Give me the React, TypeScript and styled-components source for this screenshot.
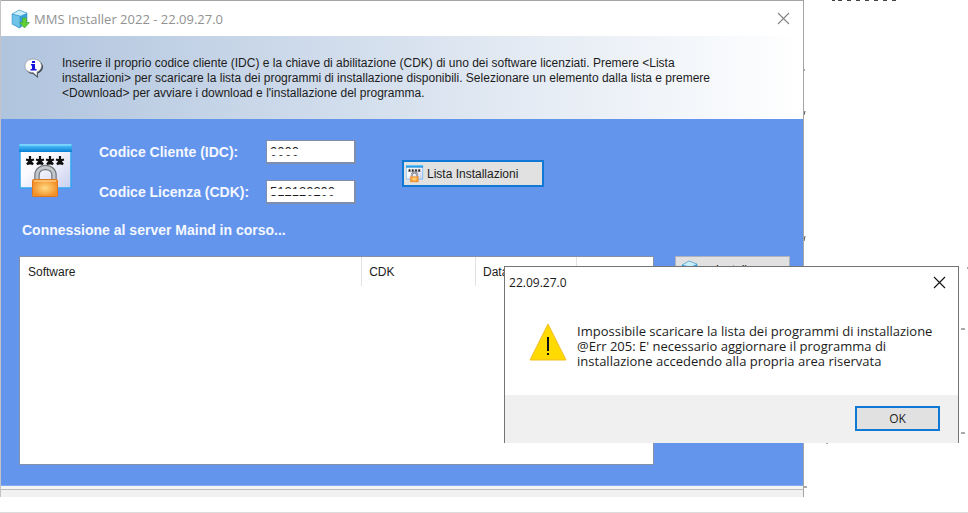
import React from "react";
import styled, { createGlobalStyle } from "styled-components";

const GlobalStyle = createGlobalStyle`
  * { box-sizing: border-box; }
  body { margin: 0; background: #fff; font-family: "Liberation Sans", Arial, sans-serif; font-size: 12px; color: #1c1c1c; }
  button, input { font: inherit; color: inherit; }
`;

const Desktop = styled.div`
  position: relative;
  min-height: 100vh;
  display: flex;
  align-items: flex-start;
  padding-left: 1px;
  background: #fff;
  border-bottom: 1px solid #dcdcdc;
`;

const Window = styled.main`
  flex: 1;
  min-width: 0;
  border: 1px solid #a5a5a8;
  border-left: 0;
  border-bottom: 0;
  background: #fff;
  box-shadow: -1px 0 0 #c4c4c8;
`;

const Backdrop = styled.aside`
  width: 17%;
  svg { display: block; }
`;

const TitleBar = styled.header<{ $active?: boolean }>`
  display: flex;
  align-items: center;
  font-family: "Open Sans", "Noto Sans", sans-serif;
  color: ${(p) => (p.$active ? "#1a1a1a" : "#929292")};
`;

const MainTitleBar = styled(TitleBar)`
  height: 35px;
  padding: 0 13px 0 9px;
  gap: 4px;
`;

const DialogTitleBar = styled(TitleBar)`
  height: 31px;
  padding: 0 12px 0 4px;
`;

const Title = styled.h1<{ $size: number }>`
  flex: 1;
  margin: 0;
  font-size: ${(p) => p.$size}px;
  font-weight: 400;
  line-height: 20px;
`;

const CloseButton = styled.button`
  display: flex;
  padding: 0;
  border: 0;
  background: none;
`;

const Banner = styled.section`
  display: flex;
  align-items: flex-start;
  gap: 18px;
  height: 83px;
  padding: 20px 80px 0 23px;
  background: linear-gradient(90deg, #b0c4de, #fff);
`;

const BannerText = styled.p`
  flex: 1;
  margin: 0;
  line-height: 15px;
`;

const Body = styled.section`
  padding: 21px 13px 20px 18px;
  background: #6495ed;
  border-bottom: 1px solid #84a9ee;
`;

const LoginRow = styled.form`
  display: flex;
  align-items: flex-start;
`;

const LockSlot = styled.div`
  width: 80px;
  padding-top: 4px;
`;

const Fields = styled.div`
  display: grid;
  grid-template-columns: 167px 90px;
  row-gap: 16px;
  align-items: center;
`;

const FieldLabel = styled.label`
  color: #f4f8ff;
  font-size: 14px;
  font-weight: 700;
  line-height: 16px;
`;

const FieldBox = styled.span`
  position: relative;
  display: block;
  height: 24px;
  &::after {
    content: "";
    position: absolute;
    left: 3px;
    right: 3px;
    top: 9px;
    height: 6px;
    background: #fff;
  }
`;

const Field = styled.input`
  display: block;
  width: 100%;
  height: 24px;
  padding: 0 3px;
  border: 2px solid #7f8fab;
  border-width: 1px 2px 2px 1px;
  background: #fff;
  font-size: 13px;
`;

const ListButton = styled.button`
  display: flex;
  align-items: center;
  gap: 3px;
  width: 142px;
  height: 27px;
  margin: 20px 0 0 46px;
  padding: 0 2px;
  border: 2px solid #0f79d5;
  background: #e1e1e1;
`;

const Status = styled.p`
  margin: 18px 0 18px 3px;
  color: #f4f8ff;
  font-size: 14px;
  font-weight: 700;
  line-height: 16px;
`;

const ListRow = styled.div`
  display: flex;
  align-items: flex-start;
  gap: 21px;
`;

const ListFrame = styled.div`
  flex: 1;
  height: 209px;
  border: 1px solid #8491a8;
  background: #fff;
`;

const SoftwareTable = styled.table`
  width: 100%;
  table-layout: fixed;
  border-collapse: collapse;
`;

const HeadCell = styled.th<{ $width: string }>`
  width: ${(p) => p.$width};
  height: 29px;
  padding: 1px 0 0 7px;
  border-right: 1px solid #e2e2e2;
  font-weight: 400;
  text-align: left;
  &:first-child { padding-left: 8px; }
  &:last-child { border-right: 0; }
`;

const InstallButton = styled.button`
  display: flex;
  align-items: center;
  gap: 16px;
  width: 115px;
  height: 27px;
  padding: 0 4px;
  border: 1px solid #adb2bc;
  background: #e1e1e1;
`;

const StatusStrip = styled.footer`
  height: 11px;
  border-top: 3px solid #f5f5f5;
  background: #f1f1f1;
  box-shadow: inset 0 1px 0 #bdbdbd;
`;

const Dialog = styled.section`
  position: absolute;
  top: 266px;
  right: 9px;
  width: 47%;
  border: 1px solid #747474;
  border-bottom: 0;
  background: #fff;
  font-family: "Open Sans", "Noto Sans", sans-serif;
`;

const Message = styled.div`
  display: flex;
  gap: 10px;
  height: 97px;
  padding: 26px 12px 0 24px;
`;

const MessageText = styled.p`
  margin: 0;
  font-size: 13px;
  line-height: 15px;
`;

const Actions = styled.footer`
  display: flex;
  justify-content: flex-end;
  height: 48px;
  padding: 11px 18px 0;
  background: #f0f0f0;
`;

const OkButton = styled.button`
  width: 85px;
  height: 25px;
  padding: 0;
  border: 2px solid #0f79d5;
  background: #e1e1e1;
`;

const BoxIcon = () => (
  <svg width="20" height="20" viewBox="0 0 20 20" aria-hidden="true">
    <path d="M2 5 9 1l8 3v10l-8 5-7-4z" fill="#3aa0d8" />
    <path d="M2 5 9 1l8 3-7 3z" fill="#c9eefa" />
    <path d="M2 5l8 2v12l-8-4z" fill="#6dc3ea" />
    <path d="M2 5l8 2v12l-8-4z M2 5 9 1l8 3v10l-8 5" fill="none" stroke="#2f87bd" strokeWidth=".5" />
    <path d="M12.500 9h4v4.500h3L14.500 19 9.500 13.500h3z" fill="#62ce35" stroke="#45a837" strokeWidth=".7" />
  </svg>
);

const CloseIcon = ({ color }: { color: string }) => (
  <svg width="13" height="13" viewBox="0 0 13 13" aria-hidden="true">
    <path d="M1 1l11 11M12 1 1 12" stroke={color} strokeWidth="1.1" />
  </svg>
);

const InfoIcon = () => (
  <svg width="20" height="23" viewBox="0 -2 20 23" aria-hidden="true">
    <path d="M10 2c5 0 9 3 9 7 0 3-2 5-5 6.500V20l-5-4C5 16 2 13 2 9.500S5 2 10 2z" fill="#3f4650" />
    <path d="M9 1c5 0 8.500 3 8.500 7 0 3-2 5-4.500 6v4l-4-3.500C4 14.500 1 12 1 8s3-7 8-7z" fill="#fff" stroke="#8b929e" strokeWidth=".7" />
    <path d="M8 3h3v2H8zM7 6h4v5h1.500v1.500H6.500V11H8V7.500H7z" fill="#1414dc" />
  </svg>
);

const PasswordLockIcon = ({ size }: { size: number }) => (
  <svg width={size} height={size} viewBox="0 0 56 56" aria-hidden="true">
    <defs>
      <linearGradient id="pane" x2="1" y2="1"><stop stopColor="#fff" /><stop offset=".4" stopColor="#fbfbff" /><stop offset="1" stopColor="#c9cfef" /></linearGradient>
      <radialGradient id="lock"><stop stopColor="#ffdc85" /><stop offset="1" stopColor="#f39229" /></radialGradient>
      <linearGradient id="bar" x2="0" y2="1"><stop stopColor="#5cc9ff" /><stop offset="1" stopColor="#087fd5" /></linearGradient>
    </defs>
    <rect x="1" y="1" width="51" height="43" rx="1" fill="url(#pane)" stroke="#35a5f1" strokeWidth="1.500" />
    <path d="M0 0h53v8H0z" fill="url(#bar)" />
    <path d="M1 1h51" stroke="#9be3ff" />
    <g stroke="#111" strokeWidth="2.200">
      {[11, 21, 31, 41].map((x) => (
        <path key={x} d={`M${x} 12v4.500M${x - 4} 15.500l4 1 4-1M${x - 3} 20.500l3-4 3 4`} />
      ))}
    </g>
    <path d="M18 37v-6c0-10 17-10 17 0v6" fill="none" stroke="#737780" strokeWidth="5.500" />
    <path d="M18 37v-6c0-10 17-10 17 0v6" fill="none" stroke="#c4c7ca" strokeWidth="3" />
    <rect x="13.500" y="35.500" width="25" height="17" rx="1" fill="url(#lock)" stroke="#df771e" />
    <path d="M15 37h22" stroke="#ffe5a8" />
  </svg>
);

const WarningIcon = () => (
  <svg width="38" height="38" viewBox="0 0 38 38" aria-hidden="true">
    <path d="M19 0 37 36H1z" fill="#ffda00" stroke="#f5bd25" />
    <path d="M18 13h2v14h-2zM18 29h2v2h-2z" fill="#111" />
  </svg>
);

const BackdropMarks = () => (
  <svg width="100%" height="490" aria-hidden="true">
    <path d="M28 0h3m3 0h4m5 0h4m5 0h4m5 0h4m5 0h4m5 0h4m5 0h4" stroke="#444" strokeWidth="2" />
    <path d="M0 70h1M0 115l1-4M0 241l1-5M22 443h2M157 329h4M157 433h4M163 268h3M0 487h3" stroke="#555" />
  </svg>
);

export default function App() {
  return (
    <>
      <GlobalStyle />
      <Desktop>
        <Window>
          <MainTitleBar>
            <BoxIcon />
            <Title $size={13}>MMS Installer 2022 - 22.09.27.0</Title>
            <CloseButton aria-label="Chiudi"><CloseIcon color="#858585" /></CloseButton>
          </MainTitleBar>
          <Banner>
            <InfoIcon />
            <BannerText>
              Inserire il proprio codice cliente (IDC) e la chiave di abilitazione (CDK) di uno dei software licenziati. Premere &lt;Lista<br />
              installazioni&gt; per scaricare la lista dei programmi di installazione disponibili. Selezionare un elemento dalla lista e premere<br />
              &lt;Download&gt; per avviare i download e l'installazione del programma.
            </BannerText>
          </Banner>
          <Body>
            <LoginRow onSubmit={(e) => e.preventDefault()}>
              <LockSlot><PasswordLockIcon size={56} /></LockSlot>
              <Fields>
                <FieldLabel htmlFor="idc">Codice Cliente (IDC):</FieldLabel>
                <FieldBox><Field id="idc" defaultValue="0000" /></FieldBox>
                <FieldLabel htmlFor="cdk">Codice Licenza (CDK):</FieldLabel>
                <FieldBox><Field id="cdk" defaultValue="512120200" /></FieldBox>
              </Fields>
              <ListButton type="submit"><PasswordLockIcon size={18} />Lista Installazioni</ListButton>
            </LoginRow>
            <Status role="status">Connessione al server Maind in corso...</Status>
            <ListRow>
              <ListFrame>
                <SoftwareTable>
                  <thead>
                    <tr>
                      <HeadCell $width="54%">Software</HeadCell>
                      <HeadCell $width="18%">CDK</HeadCell>
                      <HeadCell $width="16%">Data</HeadCell>
                      <HeadCell $width="12%" />
                    </tr>
                  </thead>
                </SoftwareTable>
              </ListFrame>
              <InstallButton><BoxIcon />Installa</InstallButton>
            </ListRow>
          </Body>
          <StatusStrip />
        </Window>
        <Backdrop><BackdropMarks /></Backdrop>
        <Dialog role="dialog" aria-labelledby="dialog-title">
          <DialogTitleBar $active>
            <Title as="h2" id="dialog-title" $size={12}>22.09.27.0</Title>
            <CloseButton aria-label="Chiudi avviso"><CloseIcon color="#111" /></CloseButton>
          </DialogTitleBar>
          <Message>
            <WarningIcon />
            <MessageText>
              Impossibile scaricare la lista dei programmi di installazione<br />
              @Err 205: E' necessario aggiornare il programma di<br />
              installazione accedendo alla propria area riservata
            </MessageText>
          </Message>
          <Actions><OkButton>OK</OkButton></Actions>
        </Dialog>
      </Desktop>
    </>
  );
}
